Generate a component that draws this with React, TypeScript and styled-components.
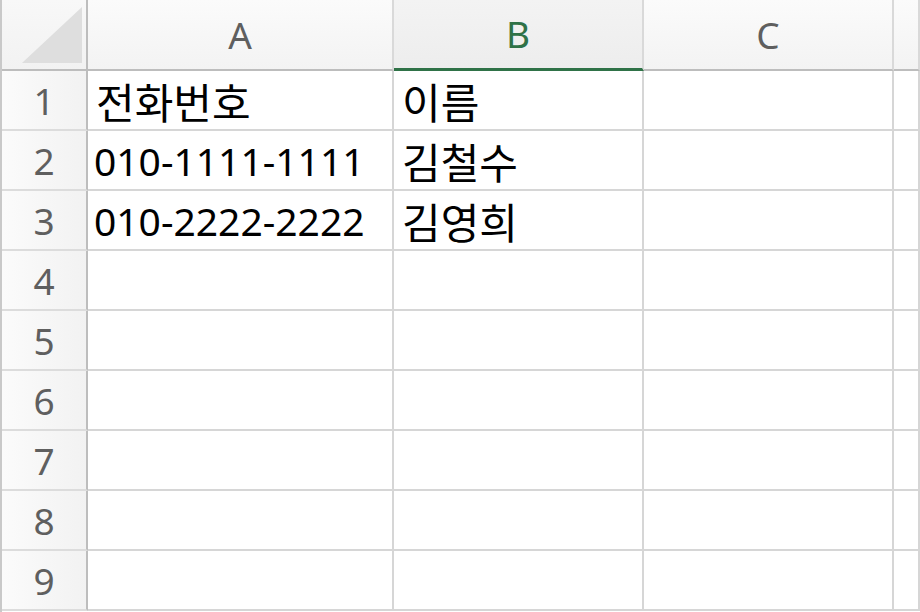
import React from "react";
import styled, { createGlobalStyle } from "styled-components";

const GlobalStyle = createGlobalStyle`
    html, body {
        margin: 0;
        padding: 0;
        background: #ffffff;
        overflow: hidden;
    }
    body {
        font-family: "Noto Sans", "Noto Sans CJK KR", sans-serif;
    }
`;

const COLS = ["A", "B", "C", ""];
const SELECTED = "B";

const rows: string[][] = [
    ["전화번호", "이름"],
    ["010-1111-1111", "김철수"],
    ["010-2222-2222", "김영희"],
    [], [], [], [], [], [],
];

const isHangul = (s: string) => /[\uac00-\ud7a3]/.test(s);

const Sheet = styled.div`
    display: grid;
    grid-template-columns: 86px 306px 250px 250px 1fr;
    grid-template-rows: 71px repeat(9, 60px) 1fr;
    width: 920px;
    height: 612px;
    box-sizing: border-box;
    border-left: 2px solid #c9c9c9;
`;

const Corner = styled.div`
    position: relative;
    box-sizing: border-box;
    border-right: 2px solid #bdbdbd;
    border-bottom: 2px solid #bdbdbd;
    background: linear-gradient(180deg, #f8f8f8 0%, #f2f2f2 100%);
`;

const CornerTriangle = styled.svg`
    position: absolute;
    left: 18px;
    top: 5px;
`;

const ColHeader = styled.div<{ $selected?: boolean }>`
    box-sizing: border-box;
    display: flex;
    align-items: center;
    justify-content: center;
    padding-bottom: 1px;
    font-size: 37px;
    color: ${(p) => (p.$selected ? "#2f7247" : "#5f5f5f")};
    background: ${(p) =>
        p.$selected
            ? "linear-gradient(180deg, #f3f3f3 0%, #ededed 100%)"
            : "linear-gradient(180deg, #fbfbfb 0%, #f3f3f3 100%)"};
    border-right: 2px solid #d9d9d9;
    border-bottom: ${(p) => (p.$selected ? "3px solid #2f7247" : "2px solid #bdbdbd")};
`;

const RowHeader = styled.div`
    box-sizing: border-box;
    display: flex;
    align-items: center;
    justify-content: center;
    font-size: 37px;
    color: #5f5f5f;
    background: linear-gradient(90deg, #fbfbfb 0%, #f2f2f2 100%);
    border-right: 2px solid #bdbdbd;
    border-bottom: 2px solid #dcdcdc;
`;

const Cell = styled.div<{ $ko?: boolean }>`
    box-sizing: border-box;
    display: flex;
    align-items: center;
    padding: 0 0 0 ${(p) => (p.$ko ? "8px" : "6px")};
    font-size: ${(p) => (p.$ko ? "42px" : "39px")};
    color: #000000;
    white-space: nowrap;
    overflow: hidden;
    border-right: 2px solid #d6d6d6;
    border-bottom: 2px solid #d6d6d6;
`;

export default function App() {
    return (
        <>
            <GlobalStyle />
            <Sheet>
                <Corner>
                    <CornerTriangle width="64" height="60" viewBox="0 0 64 60">
                        <polygon points="2,58 62,2 62,58" fill="#dedede" />
                    </CornerTriangle>
                </Corner>
                {COLS.map((c, i) => (
                    <ColHeader key={i} $selected={c === SELECTED}>
                        {c}
                    </ColHeader>
                ))}

                {rows.map((r, i) => (
                    <React.Fragment key={i}>
                        <RowHeader>{i + 1}</RowHeader>
                        {COLS.map((_, j) => {
                            const v = r[j] ?? "";
                            return (
                                <Cell key={j} $ko={isHangul(v)}>
                                    {v}
                                </Cell>
                            );
                        })}
                    </React.Fragment>
                ))}
            </Sheet>
        </>
    );
}
